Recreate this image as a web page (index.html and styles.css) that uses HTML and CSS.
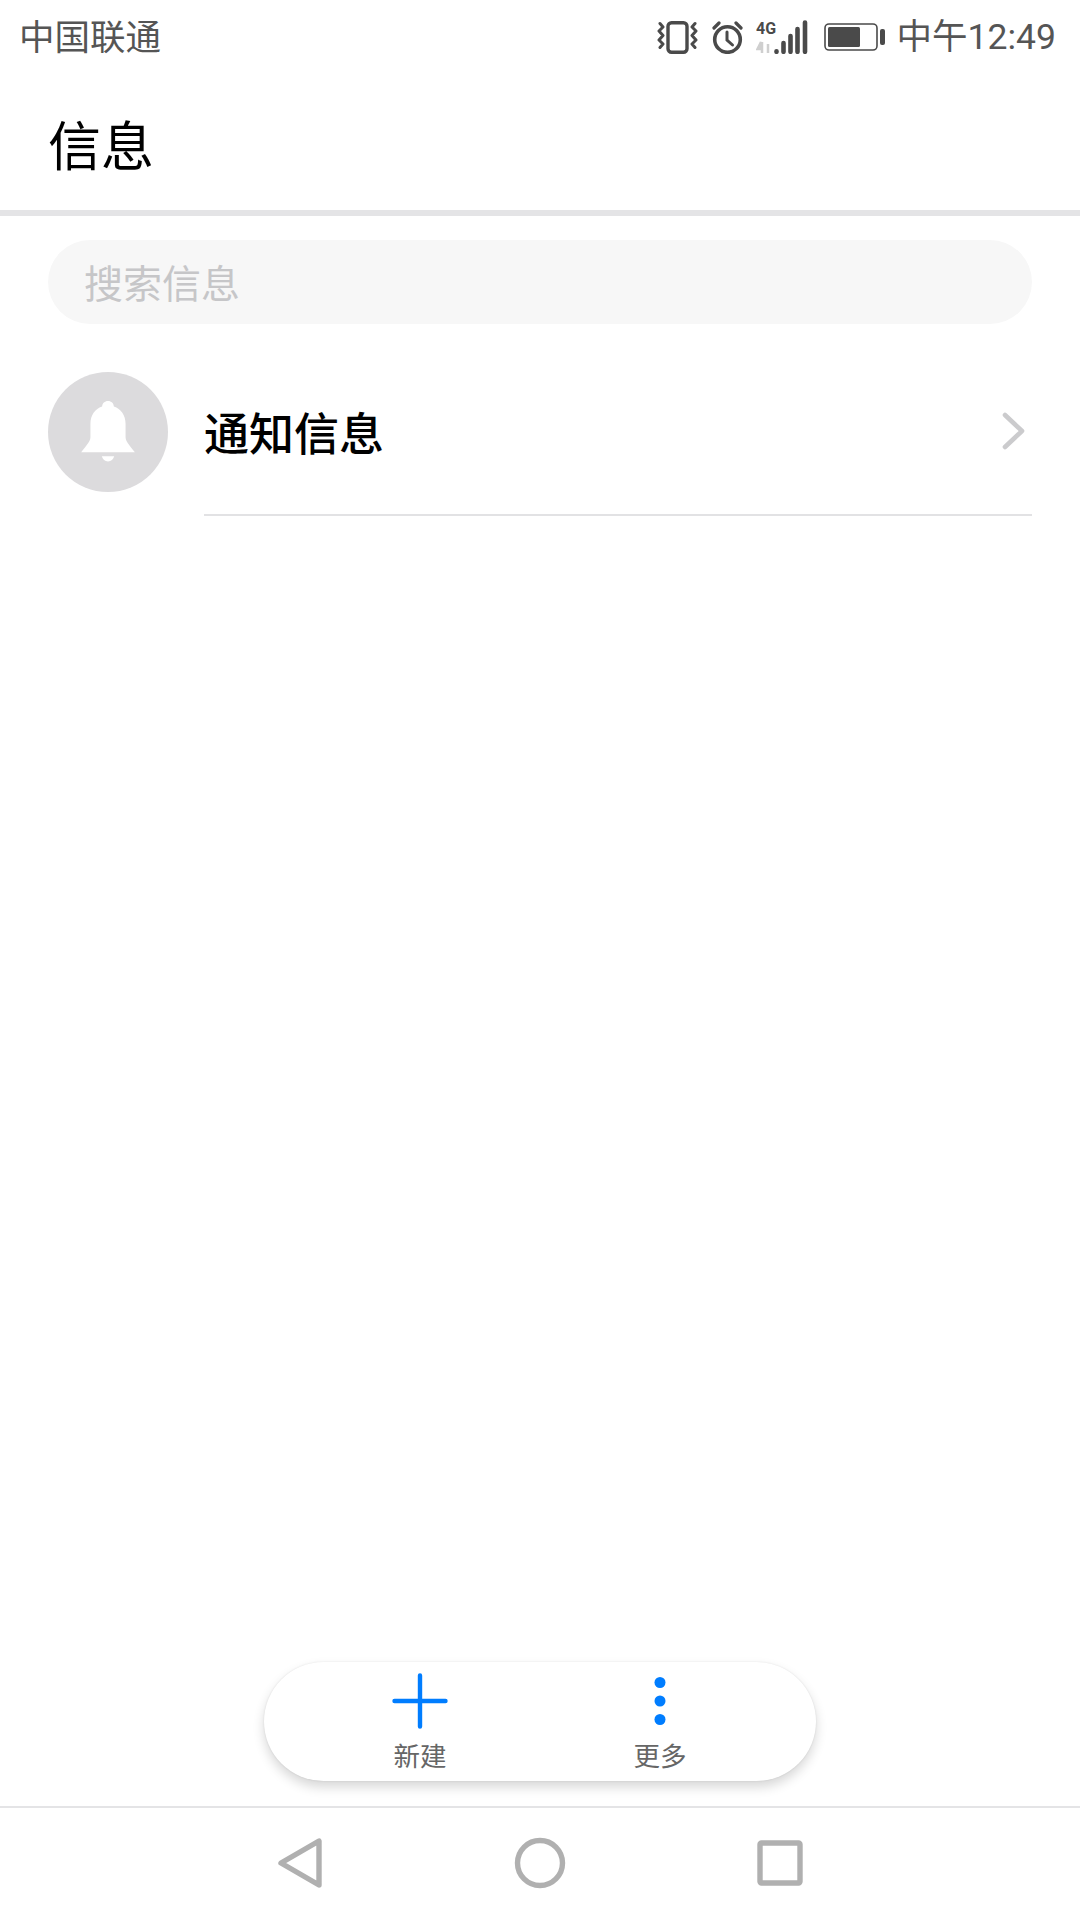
FILE: index.html
```html
<!DOCTYPE html>
<html lang="zh">
<head>
<meta charset="utf-8">
<title>信息</title>
<link rel="stylesheet" href="styles.css">
</head>
<body>
<div class="app">
  <div class="status">
    <span class="carrier">中国联通</span>
    <div class="status-right">
      <svg class="i-vib" width="41" height="33" viewBox="0 0 41 33" fill="none" stroke="#4a4a4a">
        <rect x="11" y="1.700" width="19" height="29.600" rx="3.500" stroke-width="3.400"/>
        <path d="M3 2.500l3 3.500-4 4 4 4.500-4 4.500 4 4-3 3.500M38 2.500l-3 3.500 4 4-4 4.500 4 4.500-4 4 3 3.500" stroke-width="3" stroke-linecap="round" stroke-linejoin="round"/>
      </svg>
      <svg class="i-alarm" width="31" height="33" viewBox="0 0 31 33" fill="none" stroke="#4a4a4a">
        <circle cx="15.500" cy="18.500" r="12.800" stroke-width="3.600"/>
        <path d="M15 11v8l5.500 5" stroke-width="3" stroke-linecap="round"/>
        <path d="M2 7l5-5M29 7l-5-5" stroke-width="3.200" stroke-linecap="round"/>
      </svg>
      <svg class="i-sig" width="52" height="34" viewBox="0 0 52 34">
        <text class="g4" x="0" y="14">4G</text>
        <path d="M6 22v11M1.500 29l3.500-7v7zM12 24v9" stroke="#cfcfcf" stroke-width="2.500" fill="#cfcfcf"/>
        <g stroke="#4a4a4a" stroke-width="4.600" stroke-linecap="round">
          <path d="M20.500 31.300v.5M27.500 23v8.800M34.500 16v15.800M41.500 9v22.800M49 2.500v29.300"/>
        </g>
      </svg>
      <svg class="i-bat" width="61" height="28" viewBox="0 0 61 28">
        <rect x="1" y="1" width="52" height="26" rx="4" fill="none" stroke="#4a4a4a" stroke-width="1.600"/>
        <rect x="4" y="4" width="32" height="20" rx="1.500" fill="#4a4a4a"/>
        <rect x="56" y="6" width="5" height="16" rx="2" fill="#4a4a4a"/>
      </svg>
      <span class="time">中午12:49</span>
    </div>
  </div>

  <header class="title-bar"><h1 class="title">信息</h1></header>

  <div class="search"><span class="placeholder">搜索信息</span></div>

  <div class="row">
    <div class="avatar">
      <svg width="54" height="62" viewBox="0 0 52 60" fill="#fff">
        <path d="M26 0c3.200 0 5.500 2.200 5.700 5.400C38.500 7.500 43 14 43 22v13c0 4.500 5 9 9 14.500H0C4 44 9 39.500 9 35V22c0-8 4.500-14.500 11.300-16.600C20.500 2.200 22.800 0 26 0z"/>
        <path d="M20 53.500h12c-.8 3-3 5-6 5s-5.200-2-6-5z"/>
      </svg>
    </div>
    <div class="row-body">
      <span class="row-text">通知信息</span>
      <svg class="chev" width="23" height="38" viewBox="0 0 23 38" fill="none" stroke="#cbcbcd" stroke-width="4.600" stroke-linecap="round" stroke-linejoin="round">
        <path d="M3 3l17 16L3 35"/>
      </svg>
    </div>
  </div>

  <div class="spacer"></div>

  <div class="pill-wrap">
    <div class="pill">
      <div class="action">
        <svg width="56" height="56" viewBox="0 0 56 56" fill="none" stroke="#007dff" stroke-width="4.400" stroke-linecap="round">
          <path d="M28 2.500v51M2.500 28h51"/>
        </svg>
        <span class="action-label">新建</span>
      </div>
      <div class="action">
        <svg width="56" height="56" viewBox="0 0 56 56" fill="#007dff">
          <circle cx="28" cy="9.500" r="5.500"/>
          <circle cx="28" cy="28" r="5.500"/>
          <circle cx="28" cy="46.500" r="5.500"/>
        </svg>
        <span class="action-label">更多</span>
      </div>
    </div>
  </div>

  <nav class="nav">
    <svg width="60" height="60" viewBox="0 0 60 60" fill="none" stroke="#b0b0b0" stroke-width="5.400" stroke-linejoin="round">
      <path d="M49 8v44L11 30z"/>
    </svg>
    <svg width="60" height="60" viewBox="0 0 60 60" fill="none" stroke="#b0b0b0" stroke-width="5.400">
      <circle cx="30" cy="30" r="22.500"/>
    </svg>
    <svg width="60" height="60" viewBox="0 0 60 60" fill="none" stroke="#b0b0b0" stroke-width="5.400" stroke-linejoin="round">
      <rect x="10" y="10" width="40" height="40" rx="1.500"/>
    </svg>
  </nav>
</div>
</body>
</html>
```
FILE: styles.css
```css
* { box-sizing: border-box; }
html, body { margin: 0; padding: 0; background: #fff; }
body { font-family: Roboto, "Noto Sans CJK SC", sans-serif; }
.app { width: 1080px; height: 1920px; display: flex; flex-direction: column; overflow: hidden; }
.status { height: 72px; display: flex; align-items: center; justify-content: space-between; padding: 2px 24px 0 19px; color: #555; font-size: 35.500px; flex: none; }
.carrier { font-family: "Noto Sans CJK SC", sans-serif; line-height: 1; margin-top: -4px; }
.status-right { display: flex; align-items: center; }
.status-right svg { display: block; flex: none; }
.i-alarm { margin-left: 14px; }
.i-sig { margin-left: 13px; }
.i-bat { margin-left: 16px; }
.time { margin-left: 12px; line-height: 1; padding-top: 2px; font-family: Roboto, "Noto Sans CJK SC", sans-serif; }
.g4 { font: 700 16px "Liberation Sans Narrow", Roboto, sans-serif; fill: #4a4a4a; }
.title-bar { height: 144px; flex: none; display: flex; align-items: center; padding: 4px 0 0 48px; border-bottom: 6px solid #e4e4e6; }
.title { margin: 0; font: 400 53px/1 "Noto Sans CJK SC", sans-serif; color: #000; }
.search { margin: 24px 48px 0; height: 84px; border-radius: 42px; background: #f7f7f7; display: flex; align-items: center; padding: 0 0 2px 36px; flex: none; }
.placeholder { font: 400 39px/1 "Noto Sans CJK SC", sans-serif; color: #c6c6c8; }
.row { margin: 48px 48px 0; display: flex; flex: none; }
.avatar { width: 120px; height: 120px; border-radius: 50%; background: #dcdbdd; display: flex; align-items: center; justify-content: center; flex: none; }
.row-body { margin-left: 36px; flex: 1; height: 144px; padding: 0 7px 24px 0; border-bottom: 2px solid #e2e2e4; display: flex; align-items: center; justify-content: space-between; }
.row-text { font: 500 45px/1 "Noto Sans CJK SC", sans-serif; color: #000; }
.spacer { flex: 1; }
.pill-wrap { display: flex; justify-content: center; flex: none; padding-bottom: 25px; }
.pill { width: 552px; height: 119px; border-radius: 60px; background: #fff; box-shadow: 0 6px 12px rgba(0,0,0,.16), 0 0 2px rgba(0,0,0,.1); display: flex; justify-content: center; gap: 184px; padding-top: 11px; }
.action { width: 56px; display: flex; flex-direction: column; align-items: center; }
.action svg { display: block; flex: none; }
.action-label { margin-top: 10px; font: 400 26.500px/1.200 "Noto Sans CJK SC", sans-serif; color: #666; white-space: nowrap; }
.nav { height: 114px; flex: none; border-top: 2px solid #e4e4e6; padding-bottom: 2px; display: flex; align-items: center; justify-content: center; gap: 180px; }
.nav svg { display: block; }
```
